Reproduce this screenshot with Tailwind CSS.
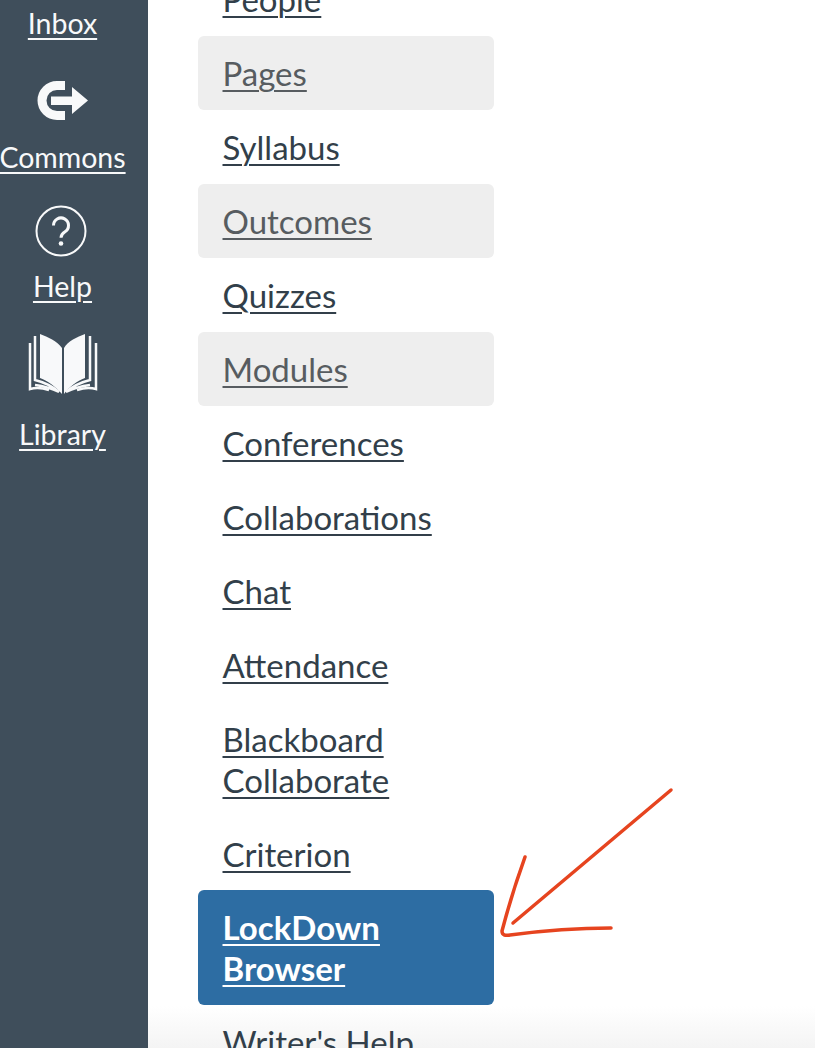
<!DOCTYPE html>
<html lang="en">
<head>
<meta charset="UTF-8" />
<title>Course navigation</title>
<script src="https://cdn.jsdelivr.net/npm/@tailwindcss/browser@4"></script>
</head>
<body class="font-['Lato',sans-serif]">
<div class="relative flex h-[1048px] w-[815px] overflow-hidden bg-white">
    <!-- global nav -->
    <nav class="flex w-[148px] shrink-0 flex-col items-center bg-[#3f4e5b] pr-[23px] text-[28.500px] leading-[36px] text-[#f8f9fa]">
        <a href="#" class="mt-[5px] underline underline-offset-[4px] decoration-2">Inbox</a>
        <svg class="mt-[39px] -ml-[2px] h-[42px] w-[52px]" viewBox="36 80 52 42" fill="currentColor" aria-hidden="true">
            <path d="M65 81H57a19.5 19.5 0 0 0 0 39H65V111H57a10.5 10.5 0 0 1 0-21H65Z" />
            <path d="M51 96.500H72V87L88 100.500L72 114V105H51Z" />
        </svg>
        <a href="#" class="mt-[17px] underline underline-offset-[4px] decoration-2">Commons</a>
        <svg class="mt-[30px] -ml-[4px] h-[52px] w-[52px]" viewBox="0 0 52 52" fill="none" aria-hidden="true">
            <circle cx="26" cy="26" r="24.500" stroke="currentColor" stroke-width="2" />
            <path d="M18.500 20.500a7.500 7.500 0 1 1 11.500 6.300c-2.600 1.700-4 3-4 6" stroke="currentColor" stroke-width="3" />
            <circle cx="26" cy="38.500" r="2.300" fill="currentColor" />
        </svg>
        <a href="#" class="mt-[11px] underline underline-offset-[4px] decoration-2">Help</a>
        <svg class="mt-[28px] h-[64px] w-[70px]" viewBox="28 333 70 64" fill="none" aria-hidden="true">
            <path d="M40 335C48 338 57 342 62 349V395C56 388 48 382 40 379Z" fill="currentColor" />
            <path d="M85 335C77 338 68 342 64 349V395C69 388 77 382 85 379Z" fill="currentColor" />
            <path d="M35 337V381C43 383 52 387 59 393C51 389 43 387 35 386" stroke="currentColor" stroke-width="2.500" />
            <path d="M30 344V390C37 388 43 389 49 391" stroke="currentColor" stroke-width="2.500" />
            <path d="M90 337V381C82 383 73 387 66 393C74 389 82 387 90 386" stroke="currentColor" stroke-width="2.500" />
            <path d="M96 344V390C89 388 83 389 77 391" stroke="currentColor" stroke-width="2.500" />
        </svg>
        <a href="#" class="mt-[20px] underline underline-offset-[4px] decoration-2">Library</a>
    </nav>

    <!-- course nav -->
    <main class="h-[1048px] flex-1 overflow-hidden bg-linear-to-b from-white from-96% to-[#f4f4f4]">
        <ul class="ml-[50px] mt-[-38px] w-[296px] text-[33px] leading-[41px] text-[#323f4a]">
            <li class="rounded-md px-[24.500px] py-[16.500px]"><a href="#" class="underline underline-offset-[4px] decoration-2">People</a></li>
            <li class="rounded-md bg-[#eeeeee] px-[24.500px] pt-[17px] pb-[16px] text-[#575c60]"><a href="#" class="underline underline-offset-[4px] decoration-2">Pages</a></li>
            <li class="rounded-md px-[24.500px] py-[16.500px]"><a href="#" class="underline underline-offset-[4px] decoration-2">Syllabus</a></li>
            <li class="rounded-md bg-[#eeeeee] px-[24.500px] py-[16.500px] text-[#575c60]"><a href="#" class="underline underline-offset-[4px] decoration-2">Outcomes</a></li>
            <li class="rounded-md px-[24.500px] py-[16.500px]"><a href="#" class="underline underline-offset-[4px] decoration-2">Quizzes</a></li>
            <li class="rounded-md bg-[#eeeeee] px-[24.500px] py-[16.500px] text-[#575c60]"><a href="#" class="underline underline-offset-[4px] decoration-2">Modules</a></li>
            <li class="rounded-md px-[24.500px] py-[16.500px]"><a href="#" class="underline underline-offset-[4px] decoration-2">Conferences</a></li>
            <li class="rounded-md px-[24.500px] py-[16.500px]"><a href="#" class="underline underline-offset-[4px] decoration-2">Collaborations</a></li>
            <li class="rounded-md px-[24.500px] py-[16.500px]"><a href="#" class="underline underline-offset-[4px] decoration-2">Chat</a></li>
            <li class="rounded-md px-[24.500px] py-[16.500px]"><a href="#" class="underline underline-offset-[4px] decoration-2">Attendance</a></li>
            <li class="rounded-md px-[24.500px] pt-[16.500px] pb-[16px]"><a href="#" class="underline underline-offset-[4px] decoration-2">Blackboard Collaborate</a></li>
            <li class="rounded-md px-[24.500px] pt-[17px] pb-[15.500px]"><a href="#" class="underline underline-offset-[4px] decoration-2">Criterion</a></li>
            <li class="rounded-md bg-[#2d6da3] px-[24.500px] pt-[17px] pb-[16px] font-bold text-white"><a href="#" class="underline underline-offset-[4px] decoration-2">LockDown Browser</a></li>
            <li class="rounded-md px-[24.500px] py-[16.500px]"><a href="#" class="underline underline-offset-[4px] decoration-2">Writer's Help</a></li>
        </ul>
    </main>

    <!-- hand drawn annotation on top of the screenshot -->
    <svg class="pointer-events-none absolute left-0 top-0 h-[1048px] w-[815px]" viewBox="0 0 815 1048" fill="none" aria-hidden="true">
        <path d="M671 790L513 923" stroke="#e6441f" stroke-width="3.500" stroke-linecap="round" />
        <path d="M525 857C516 882 508 908 502 931C502 935 505 936 510 935C540 931 575 928 611 928" stroke="#e6441f" stroke-width="3.500" stroke-linecap="round" />
    </svg>
</div>
</body>
</html>
